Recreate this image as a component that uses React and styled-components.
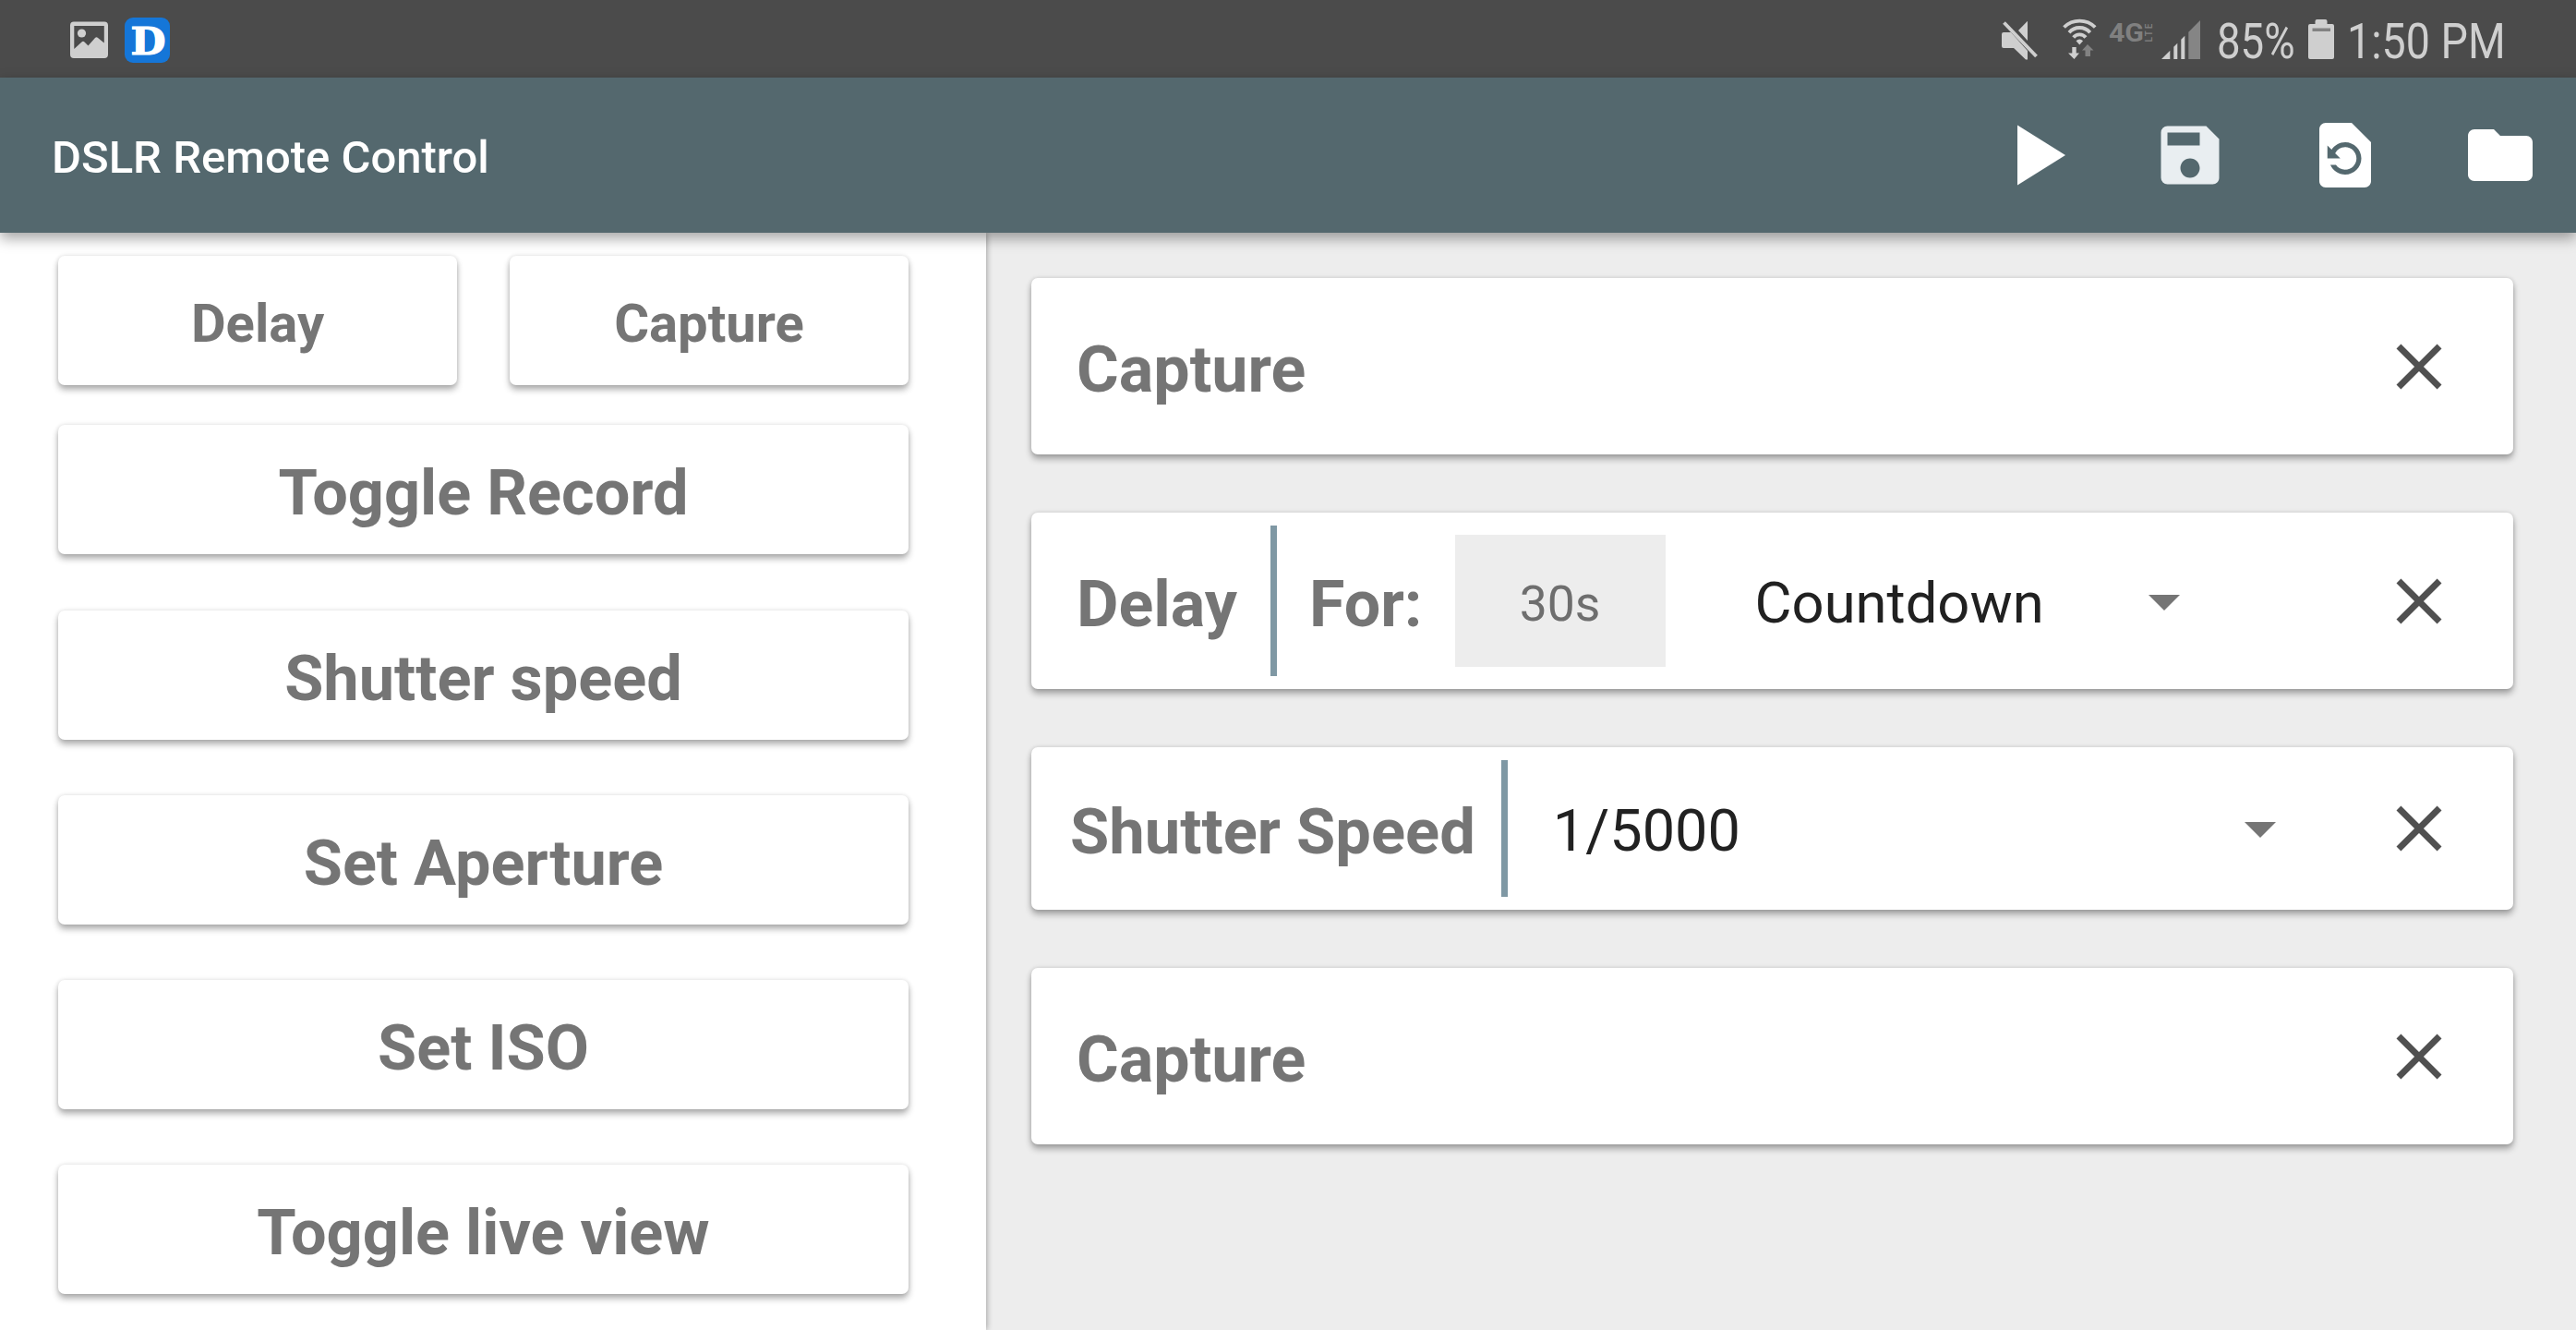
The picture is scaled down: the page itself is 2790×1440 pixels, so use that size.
import React from 'react';
import styled, { createGlobalStyle } from 'styled-components';
import { MdClose, MdFolder, MdRestorePage, MdSave } from 'react-icons/md';

const GlobalStyle = createGlobalStyle`
  * {
    box-sizing: border-box;
  }

  body {
    margin: 0;
    font-family: Roboto, sans-serif;
    background: #ededed;
  }
`;

const Screen = styled.div`
  display: flex;
  flex-direction: column;
  width: 2790px;
  height: 1440px;
  overflow: hidden;
`;

// Android status bar
const StatusBar = styled.header`
  display: flex;
  align-items: flex-start;
  flex: none;
  height: 84px;
  padding: 0 75px 0 76px;
  color: #cfcfcf;
  background: #4b4b4b;
`;

const StatusSpacer = styled.div`
  flex: 1;
`;

const StatusIcon = styled.svg`
  display: block;
  flex: none;
  width: ${(props) => props.width}px;
  height: ${(props) => props.height}px;
  margin-top: ${(props) => props.$top}px;
  margin-left: ${(props) => props.$gap || 0}px;
  overflow: visible;
  fill: currentColor;
`;

// The status bar uses a slightly condensed face
const StatusText = styled.span`
  flex: none;
  width: ${(props) => props.$width}px;
  margin-left: ${(props) => props.$gap}px;
  padding-top: 6px;
  font-size: 53px;
  line-height: 78px;
  white-space: nowrap;
  transform: scaleX(${(props) => props.$scale});
  transform-origin: left;
`;

// App bar with the title and the actions
const AppBar = styled.div`
  position: relative;
  z-index: 2;
  display: flex;
  align-items: center;
  flex: none;
  height: 168px;
  padding: 0 40px 0 56px;
  background: #54686e;
  box-shadow: 0 6px 14px rgba(0, 0, 0, 0.36);
`;

const Title = styled.h1`
  flex: 1;
  margin: 0;
  padding-top: 4px;
  color: #fff;
  font-size: 49px;
  font-weight: 500;
`;

const Actions = styled.div`
  display: flex;
  gap: 84px;
`;

const ActionButton = styled.button`
  display: flex;
  width: 84px;
  height: 84px;
  padding: 0;
  border: 0;
  background: none;
  color: ${(props) => (props.$dim ? '#e9eef1' : '#fff')};

  svg {
    width: 84px;
    height: 84px;
  }
`;

const Content = styled.div`
  display: flex;
  flex: 1;
  min-height: 0;
`;

// Left side: commands that can be added
const CommandPane = styled.div`
  position: relative;
  z-index: 1;
  flex: none;
  width: 1068px;
  padding: 25px 84px 0 63px;
  background: #fff;
  box-shadow: 0 0 7px rgba(0, 0, 0, 0.4);
`;

const CommandRow = styled.div`
  display: flex;
  gap: 57px;
  margin-bottom: ${(props) => props.$after}px;
`;

const CommandButton = styled.button`
  flex: 1;
  height: 140px;
  padding: ${(props) => (props.$small ? 5 : 7)}px 0 0;
  border: 0;
  border-radius: 7px;
  color: #757575;
  background: #fff;
  font-family: inherit;
  font-size: ${(props) => (props.$small ? 58 : 68.5)}px;
  font-weight: 700;
  box-shadow: 0 5px 7px rgba(0, 0, 0, 0.3), 0 0 5px rgba(0, 0, 0, 0.12);
`;

// Right side: the script itself
const ScriptPane = styled.div`
  display: flex;
  flex-direction: column;
  gap: 63px;
  flex: 1;
  padding: 49px 68px 0 49px;
  background: #ededed;
`;

const Card = styled.div`
  display: flex;
  align-items: center;
  height: ${(props) => (props.$short ? 176 : 191)}px;
  padding: 0 60px 0 ${(props) => (props.$short ? 42 : 49)}px;
  border-radius: 7px;
  background: #fff;
  box-shadow: 0 5px 7px rgba(0, 0, 0, 0.31), 0 0 5px rgba(0, 0, 0, 0.14);
`;

const CardLabel = styled.span`
  padding-top: 7px;
  color: #757575;
  font-size: ${(props) => props.$size || 70}px;
  font-weight: 700;
  white-space: nowrap;
`;

const Divider = styled.div`
  align-self: stretch;
  flex: none;
  width: 7px;
  margin: 14px ${(props) => props.$right}px 14px ${(props) => props.$left}px;
  background: #7f98a4;
`;

const DurationField = styled.div`
  display: flex;
  align-items: center;
  justify-content: center;
  width: 228px;
  height: 143px;
  margin-left: 35px;
  padding-top: 6px;
  color: #6e6e6e;
  background: #ededed;
  font-size: 53.5px;
`;

const Select = styled.div`
  display: flex;
  align-items: center;
  justify-content: space-between;
  flex: 1;
  margin-left: ${(props) => props.$left || 0}px;
  margin-right: ${(props) => props.$right}px;
  color: #212121;
  font-size: ${(props) => props.$size}px;
`;

const SelectValue = styled.span`
  padding-top: 5px;
`;

const Caret = styled.span`
  margin-top: 3px;
  border: solid transparent;
  border-width: 17.5px 17.5px 0;
  border-top-color: #757575;
`;

const RemoveButton = styled.button`
  display: flex;
  flex: none;
  padding: 0;
  margin-left: ${(props) => (props.$end ? 'auto' : 0)};
  border: 0;
  background: none;
  color: #505050;

  svg {
    width: 84px;
    height: 84px;
  }
`;

const commands = [
  { name: 'Toggle Record', after: 61 },
  { name: 'Shutter speed', after: 60 },
  { name: 'Set Aperture', after: 60 },
  { name: 'Set ISO', after: 60 },
  { name: 'Toggle live view', after: 0 },
];

const Status = () => (
  <StatusBar>
    <StatusIcon width={41} height={40} $top={23}>
      <path
        fillRule="evenodd"
        d="M4 .5H37a4 4 0 0 1 4 4V36a4 4 0 0 1-4 4H4a4 4 0 0 1-4-4V4.500a4 4 0 0 1 4-4zM4.300 5V30L12.500 22.500Q14 21 15.500 22.500L19.500 26.500L27 18Q28.500 16.500 30 18L36.800 23.500V5z"
      />
      <circle cx="12.500" cy="13" r="4.600" />
    </StatusIcon>
    <StatusIcon width={49} height={49} $top={19} $gap={18}>
      <rect width="49" height="49" rx="9" fill="#1576d8" />
      <text
        x="6.500"
        y="40"
        fill="#fff"
        stroke="#fff"
        strokeWidth="1.200"
        fontFamily="DejaVu Serif"
        fontWeight="700"
        fontSize="41"
        textLength="38"
        lengthAdjust="spacingAndGlyphs"
      >
        D
      </text>
    </StatusIcon>
    <StatusSpacer />
    {/* sound off */}
    <StatusIcon width={39} height={42} $top={22}>
      <path d="M28 .7V22L18 11zM2 13H10L28 33V42.500H26L13 30H2Q0 30 0 28V15Q0 13 2 13z" />
      <path d="M2.500 2.500L37.500 39" stroke="currentColor" strokeWidth="3.800" />
    </StatusIcon>
    {/* wifi with traffic arrows */}
    <StatusIcon width={37} height={44} $top={20} $gap={27}>
      <g fill="none" stroke="currentColor" strokeWidth="3.800">
        <path d="M1.500 9.500A24 24 0 0 1 35.200 9.500" />
        <path d="M7 15.200A15 15 0 0 1 29.700 15.200" />
        <path d="M11.700 20.500A8.500 8.500 0 0 1 25 20.500" />
      </g>
      <path d="M14.500 24.300Q18.300 20.500 22.100 24.300L18.300 28.500zM10.300 31H14.700V37.500H18L12.500 44L6 37.500H10.300z" />
      <path fill="#828282" d="M27 28L33.500 34.500H30V41H24.500V34.500H21z" />
    </StatusIcon>
    <StatusIcon width={47} height={19} $top={26} $gap={13}>
      <g fill="#808080" fontFamily="Roboto" fontWeight="700">
        <text y="19" fontSize="27" textLength="38" lengthAdjust="spacingAndGlyphs">
          4G
        </text>
        <text
          transform="translate(47 19.500) rotate(-90)"
          fontSize="10"
          fontWeight="500"
          textLength="20"
        >
          LTE
        </text>
      </g>
    </StatusIcon>
    {/* signal strength */}
    <StatusIcon width={42} height={42} $top={22} $gap={10}>
      <path d="M0 42L9.300 32.700V42zM13.300 42V28.700L17.300 24.700V42zM21.300 42V20.700L25.300 16.700V42z" />
      <path fill="#858585" d="M29.300 42V12.700L42 0V42z" />
    </StatusIcon>
    <StatusText $gap={18} $width={84} $scale={0.86}>
      85%
    </StatusText>
    <StatusIcon width={28} height={42} $top={21} $gap={15}>
      <path d="M9.500 0H18.500Q20.500 0 20.500 2V5H26Q28 5 28 7V41Q28 43 26 43H2Q0 43 0 41V7Q0 5 2 5H7.500V2Q7.500 0 9.500 0z" />
      <path fill="#828282" d="M4.500 9.500H24V13H4.500z" />
    </StatusIcon>
    <StatusText $gap={14} $width={173} $scale={0.88}>
      1:50 PM
    </StatusText>
  </StatusBar>
);

const App = () => {
  return (
    <Screen>
      <GlobalStyle />
      <Status />
      <AppBar>
        <Title>DSLR Remote Control</Title>
        <Actions>
          <ActionButton aria-label="Play">
            <svg viewBox="0 0 84 84" fill="currentColor">
              <path d="M23 9.500V74.500L75 42z" />
            </svg>
          </ActionButton>
          <ActionButton aria-label="Save" $dim>
            <MdSave />
          </ActionButton>
          <ActionButton aria-label="Restore">
            <MdRestorePage />
          </ActionButton>
          <ActionButton aria-label="Open">
            <MdFolder />
          </ActionButton>
        </Actions>
      </AppBar>
      <Content>
        <CommandPane>
          <CommandRow $after={43}>
            <CommandButton $small>Delay</CommandButton>
            <CommandButton $small>Capture</CommandButton>
          </CommandRow>
          {commands.map(({ name, after }) => (
            <CommandRow key={name} $after={after}>
              <CommandButton>{name}</CommandButton>
            </CommandRow>
          ))}
        </CommandPane>
        <ScriptPane>
          <Card>
            <CardLabel>Capture</CardLabel>
            <RemoveButton $end>
              <MdClose />
            </RemoveButton>
          </Card>
          <Card>
            <CardLabel>Delay</CardLabel>
            <Divider $left={36} $right={35} />
            <CardLabel>For:</CardLabel>
            <DurationField>30s</DurationField>
            <Select $left={97} $right={217} $size={61.5}>
              <SelectValue>Countdown</SelectValue>
              <Caret />
            </Select>
            <RemoveButton>
              <MdClose />
            </RemoveButton>
          </Card>
          <Card $short>
            <CardLabel $size={68.7}>Shutter Speed</CardLabel>
            <Divider $left={28} $right={49} />
            <Select $right={113} $size={63}>
              <SelectValue>1/5000</SelectValue>
              <Caret />
            </Select>
            <RemoveButton>
              <MdClose />
            </RemoveButton>
          </Card>
          <Card>
            <CardLabel>Capture</CardLabel>
            <RemoveButton $end>
              <MdClose />
            </RemoveButton>
          </Card>
        </ScriptPane>
      </Content>
    </Screen>
  );
};

export default App;
